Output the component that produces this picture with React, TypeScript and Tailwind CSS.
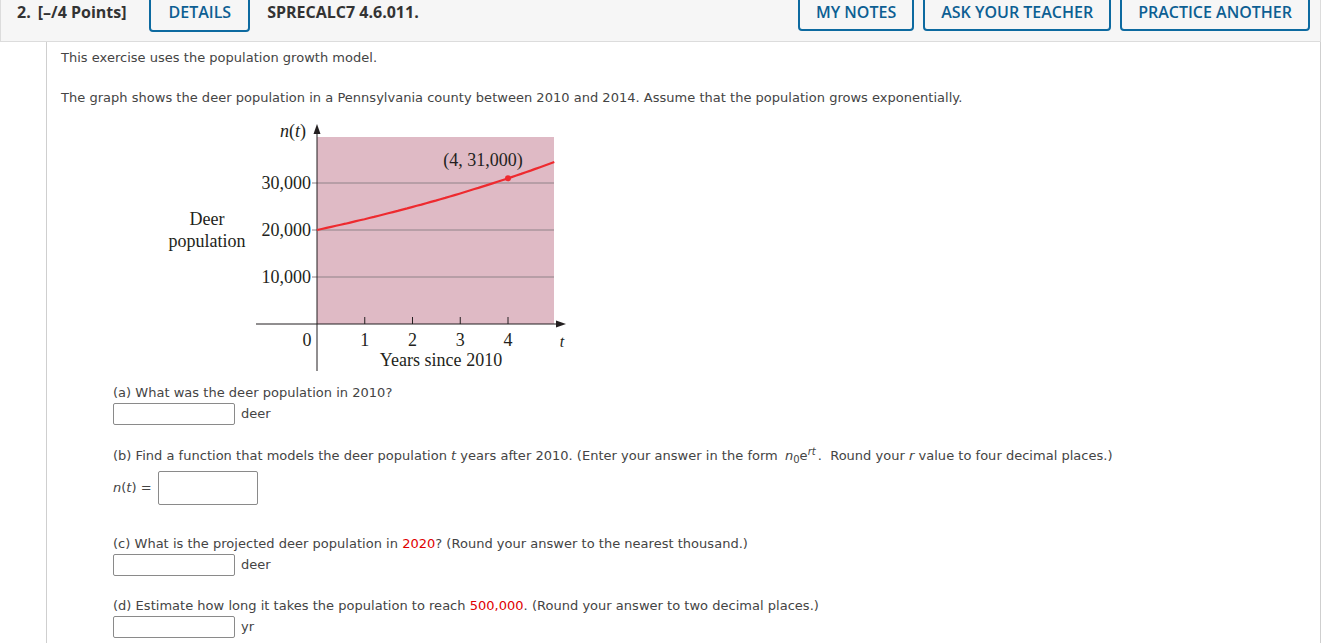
import React from "react";

function Graph() {
  // curve n(t) = 20000 e^{rt}, r from (4, 31000)
  const r = Math.log(31000 / 20000) / 4;
  const ox = 152; // x of t=0 inside svg
  const oy = 203; // y of n=0 inside svg
  const sx = 47.75;
  const sy = 0.0047;
  const pts: string[] = [];
  for (let i = 0; i <= 50; i++) {
    const t = (4.97 * i) / 50;
    const n = 20000 * Math.exp(r * t);
    pts.push(`${(ox + t * sx).toFixed(1)},${(oy - n * sy).toFixed(1)}`);
  }
  return (
    <svg width="410" height="252" viewBox="0 0 410 252" className="block" style={{ fontFamily: '"Liberation Serif", "Times New Roman", serif' }}>
      <rect x="0" y="0" width="410" height="252" fill="#ffffff" />
      <rect x={ox} y="16" width="237" height={oy - 16} fill="#dfbac5" />
      {/* grid lines */}
      {[62, 109, 156].map((y) => (
        <line key={y} x1={ox - 5} y1={y} x2={389} y2={y} stroke="#8f8288" strokeWidth="1" />
      ))}
      {/* y axis */}
      <line x1={ox} y1="10" x2={ox} y2="250" stroke="#231f20" strokeWidth="1" />
      <polygon points={`${ox},3 ${ox - 3.5},13 ${ox + 3.5},13`} fill="#231f20" />
      {/* x axis */}
      <line x1="91" y1={oy} x2="395" y2={oy} stroke="#231f20" strokeWidth="1" />
      <polygon points={`401,${oy} 391,${oy - 3.5} 391,${oy + 3.5}`} fill="#231f20" />
      {[1, 2, 3, 4].map((t) => (
        <line key={t} x1={ox + t * sx} y1={oy} x2={ox + t * sx} y2={oy - 7} stroke="#231f20" strokeWidth="1" />
      ))}
      {/* curve */}
      <polyline points={pts.join(" ")} fill="none" stroke="#ee2a2f" strokeWidth="2.2" />
      <circle cx={ox + 4 * sx} cy={oy - 31000 * sy} r="3" fill="#ee2a2f" />
      {/* labels */}
      <g fill="#231f20" fontSize="18">
        <text x="318" y="45" textAnchor="middle">(4, 31,000)</text>
        <text x="146" y="68" textAnchor="end">30,000</text>
        <text x="146" y="115" textAnchor="end">20,000</text>
        <text x="146" y="162" textAnchor="end">10,000</text>
        <text x="42" y="104" textAnchor="middle">Deer</text>
        <text x="42" y="126" textAnchor="middle">population</text>
        <text x="141" y="16" textAnchor="end">
          <tspan fontStyle="italic">n</tspan>(<tspan fontStyle="italic">t</tspan>)
        </text>
        <text x="142" y="225" textAnchor="middle">0</text>
        <text x={ox + sx} y="225" textAnchor="middle">1</text>
        <text x={ox + 2 * sx} y="225" textAnchor="middle">2</text>
        <text x={ox + 3 * sx} y="225" textAnchor="middle">3</text>
        <text x={ox + 4 * sx} y="225" textAnchor="middle">4</text>
        <text x="397" y="226" textAnchor="middle" fontStyle="italic" fontSize="16">t</text>
        <text x="276" y="245" textAnchor="middle">Years since 2010</text>
      </g>
    </svg>
  );
}

function HeaderButton({ label, wide }: { label: string; wide?: boolean }) {
  return (
    <button
      className={
        wide
          ? "-mt-[8px] h-[39px] px-[17px] border-2 border-[#0d6aa0] rounded-[4px] text-[#0d5f93] text-[16px] font-semibold bg-[#f6f6f6]"
          : "-mt-[8px] h-[39px] px-[16px] border-2 border-[#0d6aa0] rounded-[4px] text-[#0d5f93] text-[16px] font-semibold bg-[#f6f6f6]"
      }
    >
      {label}
    </button>
  );
}

function AnswerBox({ unit }: { unit: string }) {
  return (
    <div className="flex items-center h-[22px]">
      <div className="w-[122px] h-[22px] border border-[#8a8a8a] rounded-[2px] bg-white" />
      <span className="ml-[6px]">{unit}</span>
    </div>
  );
}

export default function App() {
  return (
    <div className="w-[1321px] bg-white" style={{ fontFamily: '"DejaVu Sans", Verdana, sans-serif' }}>
      <div
        className="h-[42px] border-l border-r border-b border-[#dcdcdc] bg-[#f6f6f6] flex items-start overflow-hidden"
        style={{ fontFamily: '"Open Sans", "Liberation Sans", sans-serif' }}
      >
        <div className="flex items-center h-[24px] text-[16px] font-bold text-[#333] pl-[16px]">
          <span>2.</span>
          <span className="ml-[7px]">[–/4 Points]</span>
        </div>
        <div className="ml-[23px]">
          <HeaderButton label="DETAILS" wide />
        </div>
        <div className="ml-[17px] flex items-center h-[24px] text-[16px] font-bold text-[#333]">SPRECALC7 4.6.011.</div>
        <div className="ml-auto mr-[10px] flex gap-[9px]">
          <HeaderButton label="MY NOTES" />
          <HeaderButton label="ASK YOUR TEACHER" />
          <HeaderButton label="PRACTICE ANOTHER" />
        </div>
      </div>

      <div className="ml-[46px] border-l border-r border-[#cfcfcf] pl-[14px] pt-[6px] pb-[10px] text-[13px] leading-[20px] text-[#444] tracking-[0.02px]">
        <p>This exercise uses the population growth model.</p>
        <p className="mt-[20px]">
          The graph shows the deer population in a Pennsylvania county between 2010 and 2014. Assume that the population grows exponentially.
        </p>
        <div className="mt-[13px] ml-[104px]">
          <Graph />
        </div>

        <div className="ml-[52px]">
          <p className="mt-[10px]">(a) What was the deer population in 2010?</p>
          <AnswerBox unit="deer" />

          <p className="mt-[21px]">
            (b) Find a function that models the deer population <i>t</i> years after 2010. (Enter your answer in the form{" "}
            <span className="ml-[3px] mr-[2px]">
              <i>n</i>
              <sub className="text-[10px]">0</sub>e<sup className="text-[10px]"><i>rt</i></sup>
            </span>
            . &nbsp;Round your <i>r</i> value to four decimal places.)
          </p>
          <div className="mt-[5px] flex items-center h-[34px]">
            <span>
              <i>n</i>(<i>t</i>) =
            </span>
            <div className="ml-[6px] w-[100px] h-[34px] border border-[#8a8a8a] rounded-[2px] bg-white" />
          </div>

          <p className="mt-[29px]">
            (c) What is the projected deer population in <span className="text-[#e00000]">2020</span>? (Round your answer to the nearest thousand.)
          </p>
          <AnswerBox unit="deer" />

          <p className="mt-[20px]">
            (d) Estimate how long it takes the population to reach <span className="text-[#e00000]">500,000</span>. (Round your answer to two decimal places.)
          </p>
          <AnswerBox unit="yr" />
        </div>
      </div>
    </div>
  );
}
